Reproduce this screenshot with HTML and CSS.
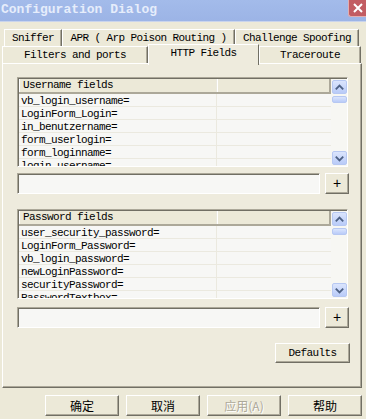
FILE: index.html
```
<!DOCTYPE html>
<html lang="en">
<head>
    <meta charset="UTF-8">
    <title>Configuration Dialog</title>
    <link rel="stylesheet" href="styles.css">
</head>
<body>
    <div class="titlebar">
        <span class="title">Configuration Dialog</span>
        <div class="close">
            <svg width="12" height="12" viewBox="0 0 12 12"><path d="M2 2 L10 10 M10 2 L2 10" stroke="#fff" stroke-width="2"/></svg>
        </div>
    </div>

    <div class="tabs">
        <div class="tab-row row1">
            <div class="tab" style="width:58px">Sniffer</div>
            <div class="tab" style="width:173px">APR ( Arp Poison Routing )</div>
            <div class="tab" style="width:124px">Challenge Spoofing</div>
        </div>
        <div class="tab-row row2">
            <div class="tab" style="width:146px">Filters and ports</div>
            <div class="tab active" style="width:111px">HTTP Fields</div>
            <div class="tab" style="width:102px">Traceroute</div>
        </div>
    </div>

    <div class="panel">
        <!-- username list -->
        <div class="list">
            <div class="grid">
                <div class="head">
                    <div class="cell c1">Username fields</div>
                    <div class="cell c2"></div>
                </div>
                <div class="row"><div class="cell c1">vb_login_username=</div><div class="cell c2"></div></div>
                <div class="row"><div class="cell c1">LoginForm_Login=</div><div class="cell c2"></div></div>
                <div class="row"><div class="cell c1">in_benutzername=</div><div class="cell c2"></div></div>
                <div class="row"><div class="cell c1">form_userlogin=</div><div class="cell c2"></div></div>
                <div class="row"><div class="cell c1">form_loginname=</div><div class="cell c2"></div></div>
                <div class="row"><div class="cell c1">login_username=</div><div class="cell c2"></div></div>
            </div>
            <div class="scroll">
                <div class="sbtn"><svg width="14" height="13" viewBox="0 0 14 13"><path d="M3 8.5 L7 4.5 L11 8.5" stroke="#4d6185" stroke-width="2" fill="none"/></svg></div>
                <div class="thumb"></div>
                <div class="sbtn down"><svg width="14" height="13" viewBox="0 0 14 13"><path d="M3 4.5 L7 8.5 L11 4.5" stroke="#4d6185" stroke-width="2" fill="none"/></svg></div>
            </div>
        </div>
        <div class="add-row">
            <div class="input"></div>
            <button class="btn plus">+</button>
        </div>

        <!-- password list -->
        <div class="list second">
            <div class="grid">
                <div class="head">
                    <div class="cell c1">Password fields</div>
                    <div class="cell c2"></div>
                </div>
                <div class="row"><div class="cell c1">user_security_password=</div><div class="cell c2"></div></div>
                <div class="row"><div class="cell c1">LoginForm_Password=</div><div class="cell c2"></div></div>
                <div class="row"><div class="cell c1">vb_login_password=</div><div class="cell c2"></div></div>
                <div class="row"><div class="cell c1">newLoginPassword=</div><div class="cell c2"></div></div>
                <div class="row"><div class="cell c1">securityPassword=</div><div class="cell c2"></div></div>
                <div class="row"><div class="cell c1">PasswordTextbox=</div><div class="cell c2"></div></div>
            </div>
            <div class="scroll">
                <div class="sbtn"><svg width="14" height="13" viewBox="0 0 14 13"><path d="M3 8.5 L7 4.5 L11 8.5" stroke="#4d6185" stroke-width="2" fill="none"/></svg></div>
                <div class="thumb"></div>
                <div class="sbtn down"><svg width="14" height="13" viewBox="0 0 14 13"><path d="M3 4.5 L7 8.5 L11 4.5" stroke="#4d6185" stroke-width="2" fill="none"/></svg></div>
            </div>
        </div>
        <div class="add-row second">
            <div class="input"></div>
            <button class="btn plus">+</button>
        </div>

        <button class="btn defaults">Defaults</button>
    </div>

    <div class="dialog-buttons">
        <button class="btn cn">确定</button>
        <button class="btn cn">取消</button>
        <button class="btn cn disabled">应用(A)</button>
        <button class="btn cn">帮助</button>
    </div>
</body>
</html>
```

FILE: styles.css
```
body {
    margin: 0;
    width: 366px;
    height: 419px;
    overflow: hidden;
    background: #ece9d8;
    font-family: "Liberation Mono", monospace;
    font-size: 11px;
    letter-spacing: -0.6px;
    color: #000;
}

.titlebar {
    display: flex;
    height: 22px;
    background: linear-gradient(#a3bbea, #9cb4e6);
    border-bottom: 1px solid #c9d4ec;
    box-sizing: border-box;
}

.title {
    padding-left: 1px;
    font-size: 13px;
    font-weight: bold;
    letter-spacing: 0;
    line-height: 20px;
    color: #e6edfb;
}

.close {
    margin-left: auto;
    width: 18px;
    height: 17px;
    box-sizing: border-box;
    background: #c25c62;
    border-left: 1px solid #e2aeb0;
    border-bottom: 1px solid #e2aeb0;
    border-bottom-left-radius: 3px;
    display: flex;
    align-items: center;
    justify-content: center;
}

.tabs {
    padding-top: 7px;
}

.tab-row {
    display: flex;
    height: 17px;
}

.row1 {
    margin-left: 4px;
}

.row2 {
    margin-left: 2px;
}

.tab {
    box-sizing: border-box;
    height: 17px;
    background: #ece9d8;
    border-top: 1px solid #fff;
    border-left: 1px solid #fff;
    border-right: 1px solid #716f64;
    box-shadow: inset -1px 0 #aca899;
    text-align: center;
    line-height: 16px;
    white-space: nowrap;
}

.tab.active {
    position: relative;
    z-index: 1;
    margin-top: -2px;
    height: 21px;
    background: #eeebdd;
    box-shadow: none;
}

.panel {
    box-sizing: border-box;
    margin-left: 2px;
    width: 360px;
    height: 325px;
    background: #eeebdd;
    border-top: 1px solid #fff;
    border-left: 1px solid #fff;
    border-right: 1px solid #716f64;
    border-bottom: 1px solid #716f64;
    box-shadow: inset -1px -1px #aca899;
    padding: 13px 0 0 14px;
    display: flex;
    flex-direction: column;
}

.list {
    box-sizing: border-box;
    width: 331px;
    height: 90px;
    display: flex;
    border-top: 1px solid #aca899;
    border-left: 1px solid #aca899;
    border-right: 1px solid #fff;
    border-bottom: 1px solid #fff;
    background: #f7f7f5;
    overflow: hidden;
}

.list.second {
    margin-top: 15px;
}

.grid {
    flex: 1;
    border-top: 1px solid #716f64;
    border-left: 1px solid #716f64;
    overflow: hidden;
}

.head {
    display: flex;
    height: 15px;
    box-sizing: border-box;
    background: #ece9d8;
    border-bottom: 2px solid #aca899;
}

.head .cell {
    box-sizing: border-box;
    border-right: 2px solid #aca899;
    border-left: 1px solid #fff;
    padding-left: 3px;
    line-height: 13px;
}

.row {
    display: flex;
    height: 13px;
    box-sizing: border-box;
    border-bottom: 1px solid #ebe9df;
}

.row .cell {
    padding: 1px 0 0 2px;
    line-height: 12px;
    box-sizing: border-box;
    overflow: hidden;
}

.cell.c1 {
    width: 198px;
    white-space: nowrap;
    border-right: 1px solid #ebe9df;
}

.cell.c2 {
    flex: 1;
}

.scroll {
    width: 16px;
    border-top: 1px solid #716f64;
    background: #f7f7f3;
    display: flex;
    flex-direction: column;
    padding: 1px 0 1px 1px;
    box-sizing: border-box;
}

.sbtn,
.thumb {
    box-sizing: border-box;
    width: 15px;
    border: 1px solid #b7c8f2;
    border-radius: 2px;
    background: linear-gradient(#dbe5fd, #b9cbf8);
}

.sbtn {
    height: 14px;
    display: flex;
    align-items: center;
    justify-content: center;
}

.thumb {
    height: 7px;
    margin-top: 2px;
}

.sbtn.down {
    margin-top: auto;
}

.add-row {
    display: flex;
    gap: 5px;
    margin-top: 6px;
    height: 21px;
}

.add-row.second {
    margin-top: 8px;
}

.input {
    box-sizing: border-box;
    width: 303px;
    height: 21px;
    background: #f7f7f5;
    border-top: 1px solid #aca899;
    border-left: 1px solid #aca899;
    border-right: 1px solid #fff;
    border-bottom: 1px solid #fff;
    box-shadow: inset 1px 1px #716f64;
}

.btn {
    box-sizing: border-box;
    margin: 0;
    padding: 0;
    background: #ece9d8;
    border-top: 1px solid #fff;
    border-left: 1px solid #fff;
    border-right: 1px solid #716f64;
    border-bottom: 1px solid #716f64;
    box-shadow: inset -1px -1px #aca899;
    font-family: "Liberation Mono", monospace;
    font-size: 11px;
    letter-spacing: -0.6px;
    color: #000;
}

.plus {
    width: 24px;
    height: 21px;
    font-family: "Liberation Sans", sans-serif;
    font-size: 14px;
    letter-spacing: 0;
    line-height: 17px;
}

.defaults {
    align-self: flex-end;
    margin: 15px 11px 0 0;
    width: 75px;
    height: 20px;
}

.dialog-buttons {
    display: flex;
    justify-content: flex-end;
    gap: 7px;
    margin-top: 7px;
    padding-right: 4px;
}

.cn {
    width: 74px;
    height: 21px;
    font-family: "Noto Sans CJK SC", sans-serif;
    font-size: 12px;
    letter-spacing: 0;
}

.cn.disabled {
    color: #aca899;
    text-shadow: 1px 1px #fff;
}
```
